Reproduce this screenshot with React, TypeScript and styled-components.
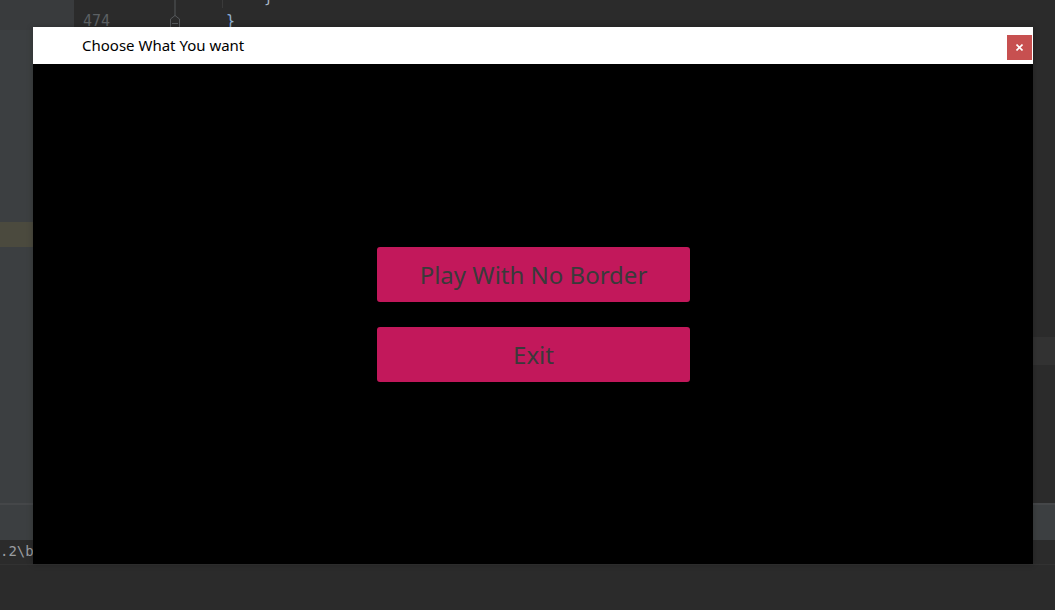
import React from 'react';
import styled, { createGlobalStyle } from 'styled-components';

const GlobalStyle = createGlobalStyle`
  html, body {
    margin: 0;
    padding: 0;
    width: 1055px;
    height: 610px;
    overflow: hidden;
    background: #2b2b2b;
  }
  * {
    box-sizing: border-box;
  }
`;

const Desktop = styled.div`
  position: relative;
  width: 1055px;
  height: 610px;
  display: flex;
  flex-direction: column;
  background: #2b2b2b;
  overflow: hidden;
`;

const EditorArea = styled.div`
  display: flex;
  height: 503px;
`;

const SidePanel = styled.div`
  width: 74px;
  display: flex;
  flex-direction: column;
  background: #3c3f41;
`;

const SideTop = styled.div`
  height: 30px;
  background: #393b3d;
`;

const SideRow = styled.div<{ $selected?: boolean }>`
  height: ${(p) => (p.$selected ? '25px' : 'auto')};
  margin-top: ${(p) => (p.$selected ? '192px' : '0')};
  background: ${(p) => (p.$selected ? '#4b4a3e' : 'transparent')};
`;

const Code = styled.div`
  flex: 1;
  display: flex;
  flex-direction: column;
  background: #2b2b2b;
`;

const CodeLine = styled.div`
  position: relative;
  height: 30px;
  display: flex;
  align-items: flex-end;
  padding-bottom: 0;
  font-family: 'DejaVu Sans Mono', monospace;
  font-size: 15px;
  color: #a9b7c6;
`;

const LineNumber = styled.span`
  width: 95px;
  padding-left: 9px;
  color: #5c6063;
`;

const Fold = styled.svg`
  width: 12px;
  height: 30px;
  margin-bottom: 0;
  margin-right: 45px;
`;

const Brace = styled.span`
  color: #8fb2d8;
`;

const PrevBrace = styled.span`
  position: absolute;
  left: 190px;
  top: -12px;
  color: #a9b7c6;
`;

const IndentGuide = styled.span`
  position: absolute;
  left: 148px;
  top: 0;
  width: 1px;
  height: 8px;
  background: #3a3a3a;
`;

const CaretRow = styled.div`
  height: 28px;
  margin-top: 307px;
  background: #323232;
`;

const ToolHeader = styled.div`
  height: 37px;
  border-top: 2px solid #454749;
  background: #3c3f41;
`;

const ConsoleRow = styled.div`
  height: 24px;
  padding-top: 3px;
  font-family: 'DejaVu Sans Mono', monospace;
  font-size: 14px;
  color: #9a9da0;
  white-space: nowrap;
  overflow: hidden;
`;

const BottomArea = styled.div`
  flex: 1;
  border-top: 1px solid #323232;
  background: #2b2b2b;
`;

const Window = styled.div`
  position: absolute;
  left: 33px;
  top: 27px;
  width: 1000px;
  height: 537px;
  display: flex;
  flex-direction: column;
  background: #000;
  box-shadow: 0 0 6px rgba(0, 0, 0, 0.25);
`;

const TitleBar = styled.div`
  height: 37px;
  display: flex;
  align-items: center;
  justify-content: space-between;
  padding-left: 49px;
  padding-right: 1px;
  background: #fff;
`;

const Title = styled.span`
  font-family: 'Noto Sans', 'Open Sans', sans-serif;
  font-size: 15px;
  color: #000;
  margin-top: -1px;
`;

const CloseButton = styled.button`
  width: 25px;
  height: 25px;
  margin-top: 8px;
  align-self: flex-start;
  border: none;
  padding: 0;
  display: flex;
  align-items: center;
  justify-content: center;
  background: #c75050;
  cursor: pointer;
`;

const Body = styled.div`
  flex: 1;
  display: flex;
  flex-direction: column;
  align-items: center;
  justify-content: center;
  gap: 25px;
  padding-left: 1px;
  padding-top: 1px;
`;

const MenuButton = styled.button`
  width: 313px;
  height: 55px;
  border: none;
  border-radius: 3px;
  background: #c2185b;
  color: #3a3a3a;
  font-family: 'Noto Sans', 'Open Sans', sans-serif;
  font-size: 24px;
  cursor: pointer;
`;

const App: React.FC = () => {
  return (
    <>
      <GlobalStyle />
      <Desktop>
        <EditorArea>
          <SidePanel>
            <SideTop />
            <SideRow $selected />
          </SidePanel>
          <Code>
            <CodeLine>
              <IndentGuide />
              <PrevBrace>{'}'}</PrevBrace>
              <LineNumber>474</LineNumber>
              <Fold viewBox="0 0 12 30">
                <path d="M6 0 V16 M1.5 19 L6 15.5 L10.5 19 V29 H1.5 Z M3 23.5 H9" stroke="#55585b" strokeWidth="1" fill="none" />
              </Fold>
              <Brace>{'}'}</Brace>
            </CodeLine>
            <CaretRow />
          </Code>
        </EditorArea>
        <ToolHeader />
        <ConsoleRow>.2\bin\java.exe</ConsoleRow>
        <BottomArea />

        <Window>
          <TitleBar>
            <Title>Choose What You want</Title>
            <CloseButton aria-label="Close">
              <svg width="7" height="7" viewBox="0 0 7 7">
                <path d="M0.5 0.5 L6.5 6.5 M6.5 0.5 L0.5 6.5" stroke="#fff" strokeWidth="1.6" />
              </svg>
            </CloseButton>
          </TitleBar>
          <Body>
            <MenuButton>Play With No Border</MenuButton>
            <MenuButton>Exit</MenuButton>
          </Body>
        </Window>
      </Desktop>
    </>
  );
};

export default App;
